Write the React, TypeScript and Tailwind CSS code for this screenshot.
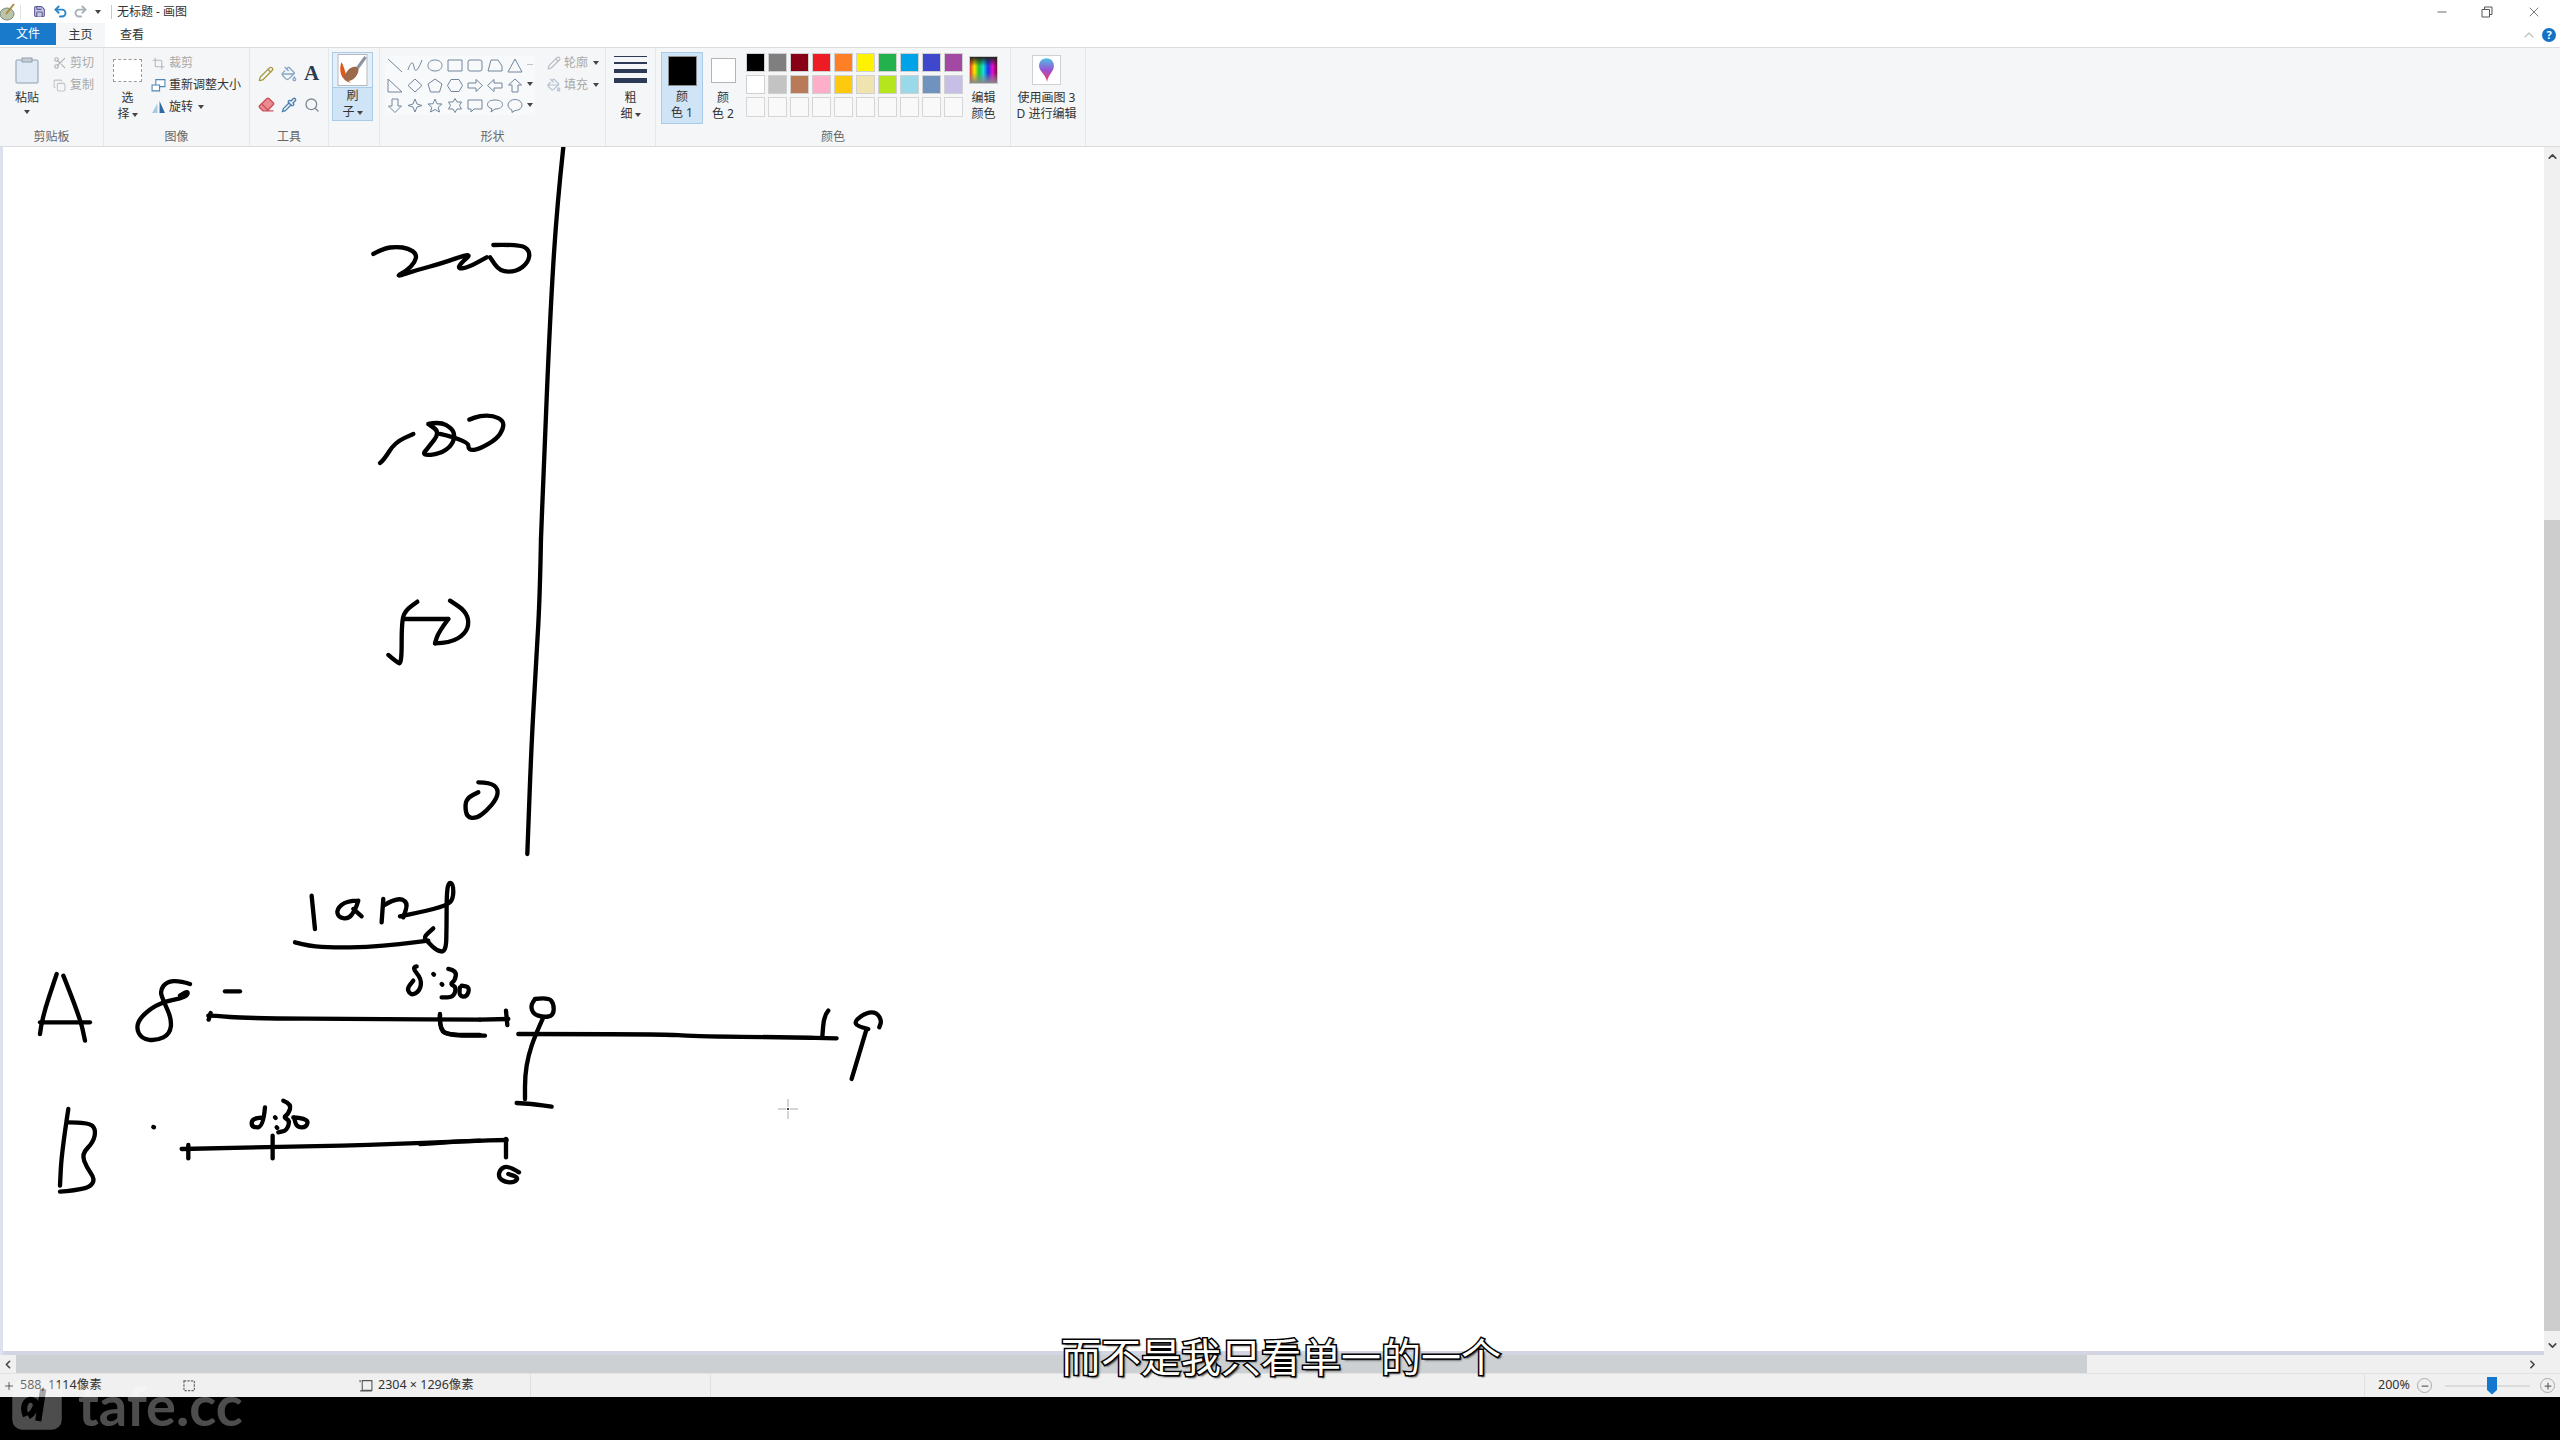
import type { ReactNode } from "react";
import {
  ChevronUp,
  ChevronLeft,
  ChevronRight,
  ChevronDown,
  Copy,
  Crop,
  Eraser,
  Minus,
  PaintBucket,
  Pencil,
  Pipette,
  Plus,
  Redo2,
  Save,
  Scissors,
  Search,
  Undo2,
  X,
} from "lucide-react";

type Pt = [number, number];

// strokes are traced at 3x around each origin, so the numbers read like the zoomed picture
const sketches: { x: number; y: number; strokes: Pt[][] }[] = [
  {
    x: 340,
    y: 140,
    strokes: [
      // axis
      [[670, 25], [650, 210], [630, 540], [610, 1020], [603, 1200]],
      // 200
      [[100, 345], [130, 328], [170, 323], [205, 328], [230, 345], [225, 370], [200, 395], [165, 415], [230, 393], [300, 375], [400, 340], [360, 375], [355, 390], [385, 385], [440, 355]],
      [[460, 318], [540, 316], [570, 335], [565, 370], [530, 398], [480, 398], [450, 355]],
      // 180
      [[120, 972], [130, 965], [165, 910], [220, 885]],
      [[265, 855], [300, 848], [335, 868], [345, 890], [335, 920], [300, 945], [245, 950], [265, 925], [300, 880], [265, 855]],
      [[300, 885], [385, 905], [385, 935], [420, 930], [470, 900], [490, 870], [490, 845], [460, 830], [420, 830], [388, 842]],
    ],
  },
  {
    x: 340,
    y: 540,
    strokes: [
      [[603, 0], [600, 160], [590, 350], [575, 600], [562, 945]],
      // 50
      [[145, 348], [170, 370], [185, 375], [185, 250], [195, 215], [232, 188]],
      [[195, 240], [325, 240]],
      [[325, 240], [295, 280], [285, 313]],
      [[285, 313], [330, 312], [375, 285], [388, 250], [375, 215], [330, 185]],
      // 0
      [[415, 730], [450, 730], [475, 750], [470, 780], [440, 815], [410, 838], [380, 835], [375, 795], [385, 775], [415, 760]],
    ],
  },
  {
    x: 0,
    y: 860,
    strokes: [
      // long
      [[935, 110], [945, 210]],
      [[1075, 125], [1040, 125], [1010, 150], [1015, 175], [1045, 180], [1065, 155], [1075, 125]],
      [[1060, 150], [1085, 172]],
      [[1145, 190], [1150, 120]],
      [[1150, 140], [1190, 115], [1225, 130], [1210, 175]],
      [[1200, 172], [1260, 160], [1340, 140], [1360, 120], [1360, 75], [1345, 70], [1340, 110], [1340, 200], [1338, 280], [1310, 275], [1285, 250], [1270, 235], [1300, 208]],
      [[885, 250], [930, 262], [1000, 265], [1100, 265], [1200, 255], [1285, 245]],
      // A
      [[120, 525], [125, 480], [170, 345]],
      [[190, 350], [240, 475], [255, 545]],
      [[120, 490], [270, 490]],
      // 8
      [[570, 375], [540, 365], [500, 368], [480, 395], [490, 425], [515, 480], [510, 525], [470, 545], [425, 540], [408, 505], [425, 470], [480, 430], [560, 415], [565, 395], [540, 410]],
      [[675, 397], [720, 397]],
      [[625, 470], [640, 470], [740, 478], [1100, 480], [1440, 482]],
      [[626, 482], [632, 462]],
      [[1320, 465], [1318, 515], [1350, 528], [1440, 528]],
      // 8:30
      [[1250, 322], [1235, 325], [1265, 360], [1260, 395], [1235, 410], [1220, 390], [1240, 365]],
      [[1300, 345], [1302, 347]],
      [[1325, 375], [1327, 377]],
      [[1345, 330], [1370, 335], [1365, 365], [1350, 375], [1370, 385], [1360, 415], [1325, 415]],
      [[1380, 385], [1375, 410], [1400, 415], [1410, 385], [1385, 380]],
      // B
      [[205, 750], [185, 880], [180, 980]],
      [[205, 790], [265, 790], [288, 810], [280, 850], [245, 885], [260, 925], [285, 960], [270, 985], [220, 995], [180, 998]],
      [[460, 804], [462, 805]],
      [[545, 870], [800, 865], [1100, 858], [1440, 845]],
      [[565, 858], [565, 898]],
      [[818, 830], [818, 898]],
      [[795, 745], [790, 805], [755, 805], [755, 780], [790, 775]],
      [[825, 775], [827, 777]],
      [[830, 805], [832, 807]],
      [[850, 725], [875, 735], [865, 765], [850, 775], [870, 785], [860, 815], [835, 820]],
      [[880, 775], [925, 778], [920, 805], [890, 805], [882, 775]],
    ],
  },
  {
    x: 420,
    y: 940,
    strokes: [
      [[180, 242], [265, 240]],
      [[258, 215], [262, 258]],
      [[60, 228], [58, 275], [100, 290], [195, 290]],
      // 0 and stem
      [[345, 180], [385, 175], [402, 195], [400, 230], [370, 235], [340, 225], [332, 200], [345, 180]],
      [[370, 235], [345, 290], [325, 350], [315, 410], [315, 480]],
      [[290, 492], [340, 495], [395, 503]],
      [[295, 285], [740, 285], [810, 292], [1120, 295], [1250, 298]],
      // 19
      [[1225, 215], [1212, 230], [1207, 295]],
      [[1345, 270], [1310, 262], [1305, 245], [1340, 220], [1370, 220], [1385, 245], [1378, 265]],
      [[1340, 270], [1310, 370], [1295, 420]],
      // B line end
      [[0, 615], [150, 605], [260, 603]],
      [[258, 600], [258, 655]],
      [[297, 700], [265, 680], [240, 690], [235, 715], [255, 730], [285, 730], [295, 715], [265, 705]],
    ],
  },
];

function smooth(points: Pt[]) {
  if (points.length < 3) return "M" + points.map((p) => p.join(" ")).join("L");
  let d = `M${points[0][0]} ${points[0][1]}`;
  for (let i = 1; i < points.length - 1; i++) {
    const [x, y] = points[i];
    const [nx, ny] = points[i + 1];
    d += `Q${x} ${y} ${(x + nx) / 2} ${(y + ny) / 2}`;
  }
  const last = points[points.length - 1];
  return d + `L${last[0]} ${last[1]}`;
}

const palette = [
  "#000000", "#7f7f7f", "#880015", "#ed1c24", "#ff7f27", "#fff200", "#22b14c", "#00a2e8", "#3f48cc", "#a349a4",
  "#ffffff", "#c3c3c3", "#b97a57", "#ffaec9", "#ffc90e", "#efe4b0", "#b5e61d", "#99d9ea", "#7092be", "#c8bfe7",
];

const shapes = [
  "M2 2L16 15",
  "M2 13C5 4 7 4 8 10S12 14 16 3",
  "M9 3C14 3 16 6 16 8.500S14 14 9 14S2 11 2 8.500S4 3 9 3Z",
  "M2 3H16V14H2Z",
  "M4 3H14Q16 3 16 5V12Q16 14 14 14H4Q2 14 2 12V5Q2 3 4 3Z",
  "M5 3H12L16 9V14H2Z",
  "M9 2L16 15H2Z",
  "M2 2L16 15H2Z",
  "M9 2L16 8.500L9 15L2 8.500Z",
  "M9 2L16 7L13.500 15H4.500L2 7Z",
  "M5 2.500H13L16.500 8.500L13 14.500H5L1.500 8.500Z",
  "M2 6H10V2.500L16.500 8.500L10 14.500V11H2Z",
  "M16 6H8V2.500L1.500 8.500L8 14.500V11H16Z",
  "M6 15V8H2.500L9 2L15.500 8H12V15Z",
  "M6 2V9H2.500L9 15.500L15.500 9H12V2Z",
  "M9 2L11 7L16 8.500L11 10L9 15L7 10L2 8.500L7 7Z",
  "M9 2L11 6.800L16 7L12.200 10.300L13.500 15L9 12.500L4.500 15L5.800 10.300L2 7L7 6.800Z",
  "M9 1.500L11 5H15.500L13.500 8.500L15.500 12H11L9 15.500L7 12H2.500L4.500 8.500L2.500 5H7Z",
  "M2 3H16V12H8L5 15V12H2Z",
  "M9 3C14 3 16.500 5 16.500 7.500S14 12 9 12L5 15L6 11.800C3 11 1.500 9.500 1.500 7.500C1.500 5 4 3 9 3Z",
  "M9 2.500C13 2.500 16 5 16 8S13 13.500 9 13.500L6 15.500V13C3.500 12 2 10 2 8C2 5 5 2.500 9 2.500Z",
];

function Caret({ className = "" }: { className?: string }) {
  return (
    <svg width="6" height="4" viewBox="0 0 6 4" className={`inline-block ${className}`}>
      <path d="M0 0H6L3 4Z" fill="#444" />
    </svg>
  );
}

function Group({ width, label, children }: { width: number; label?: string; children: ReactNode }) {
  return (
    <div className="flex flex-col shrink-0 border-r border-[#e6e7e8]" style={{ width }}>
      <div className="h-[80px] flex">{children}</div>
      <div className="h-[18px] text-center text-[12px] leading-[18px] text-[#666]">{label}</div>
    </div>
  );
}

function SmallCommand({ icon, text, muted, caret }: { icon: ReactNode; text: string; muted?: boolean; caret?: boolean }) {
  return (
    <div className={`h-[22px] flex items-center text-[12px] whitespace-nowrap ${muted ? "text-[#a9a9a9]" : "text-[#333]"}`}>
      <span className="w-[15px] flex justify-center shrink-0">{icon}</span>
      <span className="ml-[3px]">{text}</span>
      {caret && <Caret className="ml-[5px]" />}
    </div>
  );
}

function StackLabel({ children }: { children: ReactNode }) {
  return <div className="text-[12px] leading-[16px] text-center text-[#333] whitespace-nowrap">{children}</div>;
}

function Ribbon() {
  return (
    <div className="h-[100px] bg-[#f5f6f7] border-y border-[#dcdcdc] flex text-[#333] shrink-0">
      <Group width={104} label="剪贴板">
        <div className="w-[52px] pl-[2px] pt-[9px] flex flex-col items-center shrink-0">
          <svg width="24" height="27" viewBox="0 0 24 27">
            <rect x="1" y="3" width="22" height="23" rx="1" fill="#dfe8f5" stroke="#8f9fb0" />
            <rect x="7" y="1" width="10" height="4" fill="#c9ced6" stroke="#8f9fb0" />
          </svg>
          <div className="mt-[6px]">
            <StackLabel>粘贴</StackLabel>
          </div>
          <Caret className="mt-[4px]" />
        </div>
        <div className="pt-[4px]">
          <SmallCommand muted text="剪切" icon={<Scissors size={14} color="#aeb3b8" />} />
          <SmallCommand muted text="复制" icon={<Copy size={13} color="#c0c4c8" />} />
        </div>
      </Group>
      <Group width={146} label="图像">
        <div className="w-[47px] pt-[11px] flex flex-col items-center shrink-0">
          <div className="w-[29px] h-[23px] border border-dashed border-[#9a9a9a] bg-white" />
          <div className="mt-[8px]">
            <StackLabel>
              选<br />择<Caret className="ml-[2px] align-middle" />
            </StackLabel>
          </div>
        </div>
        <div className="pt-[4px]">
          <SmallCommand muted text="裁剪" icon={<Crop size={13} color="#b4b8bc" />} />
          <SmallCommand
            text="重新调整大小"
            icon={
              <svg width="15" height="14" viewBox="0 0 14 13">
                <path d="M4.500 1.500H13V8H4.500Z" fill="#fff" stroke="#4f86b8" />
                <path d="M1 6.500H8V12H1Z" fill="#fff" stroke="#4f86b8" />
              </svg>
            }
          />
          <SmallCommand
            caret
            text="旋转"
            icon={
              <svg width="15" height="14" viewBox="0 0 14 13">
                <path d="M8 1L13 12H8Z" fill="#2f6aa0" />
                <path d="M6 3L6 12H1Z" fill="#a8cbe4" />
              </svg>
            }
          />
        </div>
      </Group>
      <Group width={79} label="工具">
        <div className="grid grid-cols-3 grid-rows-2 w-[68px] ml-[5px] h-[62px] mt-[10px] place-items-center shrink-0">
          <Pencil size={16} color="#a79a45" />
          <PaintBucket size={16} color="#86a7c6" />
          <span className="font-['Liberation_Serif',serif] font-bold text-[21px] leading-none text-[#2c3a52]">A</span>
          <Eraser size={17} color="#c9545e" fill="#ee8a92" />
          <Pipette size={16} color="#4a7fb5" />
          <Search size={16} color="#7d8a96" />
        </div>
      </Group>
      <Group width={51}>
        <div className="w-[41px] h-[69px] mt-[4px] ml-[3px] border border-[#a9cbe8] bg-[#e4eff9] flex flex-col shrink-0">
          <div className="h-[36px] flex items-center justify-center border-b border-[#a9cbe8]">
            <svg width="31" height="32" viewBox="0 0 30 32">
              <rect x="0.500" y="0.500" width="29" height="31" fill="#fff" stroke="#b4b9bf" />
              <path d="M4 8C1 16 3 26 13 29C8 23 8 15 4 8Z" fill="#e0591c" />
              <path d="M8 20C11 13 18 11 21 14C22 21 15 28 9 27C6 25 6 23 8 20Z" fill="#9a6a4a" />
              <path d="M20 14L28 3" stroke="#8c94a3" strokeWidth="3" />
            </svg>
          </div>
          <div className="flex-1 bg-[#cfe4f6]">
            <StackLabel>
              刷<br />子<Caret className="ml-[2px] align-middle" />
            </StackLabel>
          </div>
        </div>
      </Group>
      <Group width={226} label="形状">
        <div className="ml-[5px] mt-[8px] w-[150px] h-[59px] flex bg-[#f8f9fa] shrink-0">
          <div className="grid grid-cols-7 w-[140px] shrink-0 place-items-center">
            {shapes.map((d) => (
              <svg key={d} width="18" height="17" viewBox="0 0 18 17">
                <path d={d} fill="none" stroke="#71869c" strokeWidth="1" />
              </svg>
            ))}
          </div>
          <div className="w-[10px] flex flex-col items-center justify-around">
            <span className="w-[6px] h-[1px] bg-[#c4c4c4]" />
            <Caret />
            <Caret />
          </div>
        </div>
        <div className="ml-[11px] pt-[4px] shrink-0">
          <SmallCommand muted caret text="轮廓" icon={<Pencil size={14} color="#b8bdc4" />} />
          <SmallCommand muted caret text="填充" icon={<PaintBucket size={14} color="#b2bfd0" />} />
        </div>
      </Group>
      <Group width={50}>
        <div className="w-full pt-[8px] flex flex-col items-center">
          <div className="w-[33px] flex flex-col gap-[5px]">
            <div className="h-[1px] bg-[#2b3a55]" />
            <div className="h-[2px] bg-[#2b3a55]" />
            <div className="h-[4px] bg-[#2b3a55]" />
            <div className="h-[5px] bg-[#2b3a55]" />
          </div>
          <div className="mt-[7px]">
            <StackLabel>
              粗<br />细<Caret className="ml-[2px] align-middle" />
            </StackLabel>
          </div>
        </div>
      </Group>
      <Group width={355} label="颜色">
        <div className="w-[42px] h-[72px] ml-[5px] mt-[4px] border border-[#a9cbe8] bg-[#cfe4f6] flex flex-col items-center pt-[3px] shrink-0">
          <div className="w-[29px] h-[30px] bg-black border border-[#8c8c8c]" />
          <div className="mt-[3px]">
            <StackLabel>
              颜<br />色 1
            </StackLabel>
          </div>
        </div>
        <div className="w-[40px] flex flex-col items-center pt-[10px] shrink-0">
          <div className="w-[25px] h-[25px] bg-white border border-[#b4b4b4]" />
          <div className="mt-[7px]">
            <StackLabel>
              颜<br />色 2
            </StackLabel>
          </div>
        </div>
        <div className="grid grid-cols-10 gap-x-[3.500px] gap-y-[3px] mt-[5px] ml-[3px] w-[217px] h-[64px] shrink-0">
          {palette.map((c) => (
            <div key={c} className="h-[19px] border border-[#d0d0d0]" style={{ backgroundColor: c }} />
          ))}
          {Array.from({ length: 10 }, (_, i) => (
            <div key={i} className="h-[20px] border border-[#d6d6d6] bg-[#f9f9f9]" />
          ))}
        </div>
        <div className="w-[41px] flex flex-col items-center pt-[8px] shrink-0">
          <div className="w-[29px] h-[28px] border border-[#c8c8c8] [background:linear-gradient(to_bottom,#222_0,transparent_35%,transparent_60%,#888_100%),linear-gradient(to_right,#e03a2a,#ffe600,#18c23c,#12d8e8,#2030e0,#e010d0,#701030)]" />
          <div className="mt-[6px]">
            <StackLabel>
              编辑<br />颜色
            </StackLabel>
          </div>
        </div>
      </Group>
      <Group width={75}>
        <div className="w-full flex flex-col items-center pt-[7px] pr-[3px]">
          <div className="w-[29px] h-[30px] bg-white border border-[#d0d0d0] flex items-center justify-center">
            <svg width="17" height="26" viewBox="0 0 16 24">
              <defs>
                <linearGradient id="balloon" x1="0" y1="0" x2="0" y2="1">
                  <stop offset="0" stopColor="#4cc0e4" />
                  <stop offset="0.500" stopColor="#9a52d4" />
                  <stop offset="1" stopColor="#f03c58" />
                </linearGradient>
              </defs>
              <path d="M8 1C12.500 1 15 4.500 15 8C15 13 10 16 8.500 23C7 16 1 13 1 8C1 4.500 3.500 1 8 1Z" fill="url(#balloon)" />
            </svg>
          </div>
          <div className="mt-[5px]">
            <StackLabel>
              使用画图 3<br />D 进行编辑
            </StackLabel>
          </div>
        </div>
      </Group>
    </div>
  );
}

function Sketch() {
  return (
    <svg width="2541" height="1204" viewBox="3 148 2541 1204" className="block bg-white shrink-0">
      {sketches.map((s) => (
        <g key={`${s.x}-${s.y}`} transform={`translate(${s.x} ${s.y}) scale(0.3333)`}>
          {s.strokes.map((st, i) => (
            <path key={i} d={smooth(st)} fill="none" stroke="#000" strokeWidth="13" strokeLinecap="round" strokeLinejoin="round" />
          ))}
        </g>
      ))}
      {/* crosshair cursor */}
      <path d="M778 1110H786M790 1110H798M788 1100V1108M788 1112V1120" stroke="#aaa" strokeWidth="1" />
      <rect x="787" y="1109" width="2" height="2" fill="#444" />
    </svg>
  );
}

export default function App() {
  return (
    <div className="relative w-[2560px] h-[1440px] flex flex-col overflow-hidden bg-black font-['Noto_Sans','Noto_Sans_CJK_SC',sans-serif]">
      {/* title bar */}
      <div className="h-[23px] bg-white flex items-center text-[12px] text-[#333] shrink-0">
        <svg width="17" height="18" viewBox="0 0 17 18" className="shrink-0">
          <ellipse cx="7" cy="11" rx="7" ry="6" fill="#b9c4a8" stroke="#7c8a78" />
          <path d="M6 11L14 1" stroke="#b08a3c" strokeWidth="2" />
        </svg>
        <div className="w-[1px] h-[14px] bg-[#e2e2e2] ml-[3px]" />
        <Save size={13} color="#5c5c96" fill="#c9c9e4" className="ml-[12px]" />
        <Undo2 size={15} color="#2a86c8" strokeWidth={3} className="ml-[7px]" />
        <Redo2 size={15} color="#a8b0b8" strokeWidth={3} className="ml-[5px]" />
        <Caret className="ml-[7px]" />
        <div className="w-[1px] h-[14px] bg-[#c8c8c8] ml-[10px]" />
        <span className="ml-[5px] whitespace-nowrap">无标题 - 画图</span>
        <div className="ml-auto flex items-center text-[#555]">
          <Minus size={14} strokeWidth={1.500} />
          <svg width="12" height="12" viewBox="0 0 12 12" className="ml-[32px]">
            <path d="M1 3.500H8.500V11H1ZM3.500 3.500V1H11V8.500H8.500" fill="none" stroke="#555" />
          </svg>
          <X size={16} strokeWidth={1.200} className="ml-[33px] mr-[18px]" />
        </div>
      </div>
      {/* tabs */}
      <div className="h-[24px] bg-white flex items-stretch text-[12px] text-[#333] shrink-0">
        <div className="w-[56px] bg-[#1979ca] text-white flex items-center justify-center mb-[2px]">文件</div>
        <div className="w-[49px] bg-[#f5f6f7] flex items-center justify-center">主页</div>
        <div className="w-[54px] flex items-center justify-center">查看</div>
        <div className="ml-auto flex items-center">
          <ChevronUp size={16} color="#c4c4c4" />
          <div className="ml-[5px] mr-[4px] w-[14px] h-[14px] rounded-full bg-[#1572c4] text-white text-[11px] font-bold flex items-center justify-center">?</div>
        </div>
      </div>
      <Ribbon />
      {/* canvas */}
      <div className="h-[1208px] flex bg-white shrink-0">
        <div className="w-[3px] bg-[#dde1ef] shrink-0" />
        <div className="flex flex-col shrink-0">
          <Sketch />
          <div className="h-[4px] bg-[#d3d6e2]" />
        </div>
        <div className="w-[16px] bg-[#f0f0f0] flex flex-col items-center shrink-0">
          <ChevronUp size={13} color="#444" strokeWidth={3} className="my-[3px]" />
          <div className="h-[354px]" />
          <div className="h-[811px] w-full bg-[#cdcdcd]" />
          <div className="flex-1" />
          <ChevronDown size={13} color="#444" strokeWidth={3} className="my-[3px]" />
        </div>
      </div>
      {/* horizontal scrollbar */}
      <div className="h-[18px] bg-[#f0f0f0] flex items-center shrink-0">
        <ChevronLeft size={13} color="#444" strokeWidth={3} className="w-[16px] shrink-0" />
        <div className="w-[2071px] h-full bg-[#cdd0d3] shrink-0" />
        <ChevronRight size={13} color="#444" strokeWidth={3} className="ml-auto mr-[21px]" />
      </div>
      {/* status bar */}
      <div className="h-[24px] bg-[#f0f0f0] border-t border-[#e2e2e2] flex items-center text-[12.500px] text-[#333] shrink-0">
        <Plus size={12} strokeWidth={1.500} className="ml-[3px] shrink-0" />
        <span className="ml-[5px] w-[160px] shrink-0">588, 1114像素</span>
        <svg width="16" height="15" viewBox="0 0 13 13" className="shrink-0">
          <path d="M3 2.500H12V11H3Z" fill="none" stroke="#666" strokeDasharray="2 1" />
        </svg>
        <svg width="14" height="14" viewBox="0 0 13 13" className="ml-[163px] shrink-0">
          <path d="M3 1.500H12V10.500H3ZM1 1V3M1 11H12" fill="none" stroke="#555" />
        </svg>
        <span className="ml-[5px] w-[152px] whitespace-nowrap shrink-0">2304 × 1296像素</span>
        <div className="w-[1px] h-full bg-[#e0e0e0] shrink-0" />
        <div className="w-[1px] h-full bg-[#e0e0e0] ml-[179px] shrink-0" />
        <div className="w-[1px] h-full bg-[#e0e0e0] ml-auto mr-[13px] shrink-0" />
        <span className="w-[39px] shrink-0">200%</span>
        <div className="w-[15px] h-[15px] rounded-full border border-[#aaa] flex items-center justify-center shrink-0">
          <Minus size={10} strokeWidth={3} color="#666" />
        </div>
        <div className="ml-[13px] w-[85px] h-[2px] bg-[#dcdcdc] flex items-center shrink-0">
          <div className="w-[10px] h-[18px] ml-[42px] bg-[#1478d0] [clip-path:polygon(0_0,100%_0,100%_75%,50%_100%,0_75%)] shrink-0" />
        </div>
        <div className="ml-[10px] mr-[5px] w-[15px] h-[15px] rounded-full border border-[#aaa] flex items-center justify-center shrink-0">
          <Plus size={10} strokeWidth={3} color="#666" />
        </div>
      </div>
      <div className="flex-1 bg-black" />
      {/* video watermark */}
      <div className="absolute left-[11px] top-[1377px] flex items-center opacity-30">
        <svg width="52" height="52" viewBox="0 0 42 42">
          <rect x="1" y="1" width="40" height="40" rx="8" fill="#fff" />
          <path d="M12 30C8 20 14 14 19 18C22 21 18 28 14 30M26 8L22 34" fill="none" stroke="#000" strokeWidth="5" />
        </svg>
        <span className="ml-[15px] text-[56px] leading-none font-bold text-white font-['Lato',sans-serif]">tafe.cc</span>
      </div>
      {/* subtitle */}
      <div className="absolute left-[1061px] top-[1328px] whitespace-nowrap text-[40px] leading-[54px] text-white font-['Noto_Sans_CJK_SC',sans-serif] [-webkit-text-stroke:3px_#000] [paint-order:stroke_fill] [text-shadow:2px_2px_2px_rgba(0,0,0,0.8)]">
        而不是我只看单一的一个
      </div>
    </div>
  );
}
